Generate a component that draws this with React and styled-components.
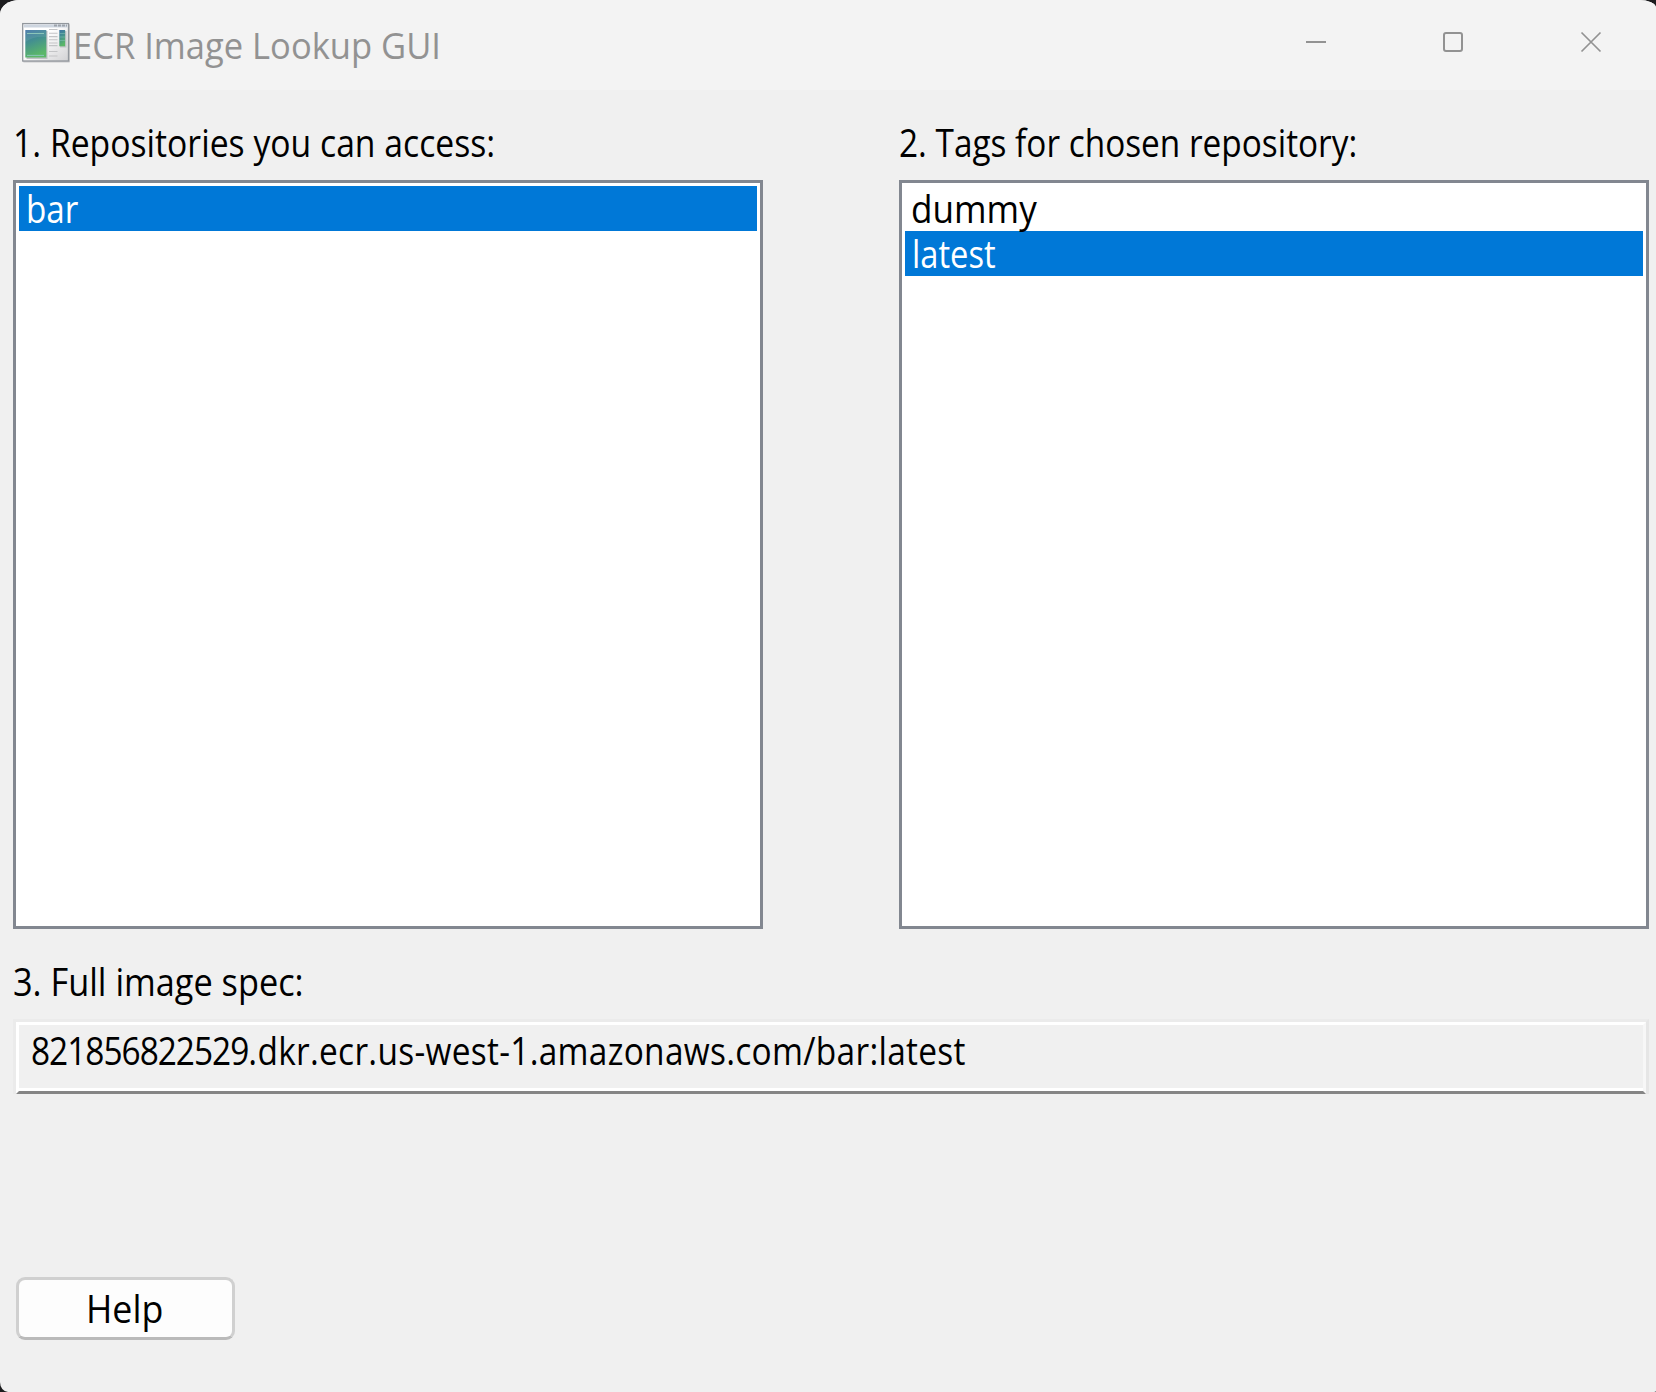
import React, { useState } from "react";
import styled, { createGlobalStyle } from "styled-components";

const GlobalStyle = createGlobalStyle`
  *, *::before, *::after { box-sizing: border-box; }
  body { margin: 0; background: #1c1c1e; }
`;

const Window = styled.div`
  width: 1656px;
  height: 1392px;
  display: flex;
  flex-direction: column;
  background: #f0f0f0;
  border-radius: 20px 17px 2px 8px / 14px 8px 1px 10px;
  overflow: hidden;
  font-family: "Open Sans", "Noto Sans", sans-serif;
  font-size: 38px;
  line-height: 42px;
  color: #000;
`;

const TitleBar = styled.header`
  flex: none;
  height: 90px;
  display: flex;
  align-items: flex-start;
  background: #f3f3f3;
  color: #929292;
`;

const AppIcon = styled.svg`
  flex: none;
  margin: 22px 3px 0 22px;
`;

const Title = styled.h1`
  flex: 1;
  margin: 21px 0 0;
  font-size: 36px;
  line-height: 49px;
  font-weight: 400;
`;

const Condensed = styled.span`
  display: inline-block;
  white-space: pre;
  transform: scaleX(${(p) => p.$ratio});
  transform-origin: 0 0;
`;

const AccountId = styled.span`
  letter-spacing: -1.15px;
`;

const ImagePath = styled.span`
  letter-spacing: 0.33px;
`;

const Controls = styled.div`
  display: flex;
  padding-right: 27px;
`;

const ControlButton = styled.button`
  width: 76px;
  height: 84px;
  margin-left: 62px;
  padding: 0;
  display: flex;
  align-items: center;
  justify-content: center;
  border: 0;
  background: none;
  color: #929292;
`;

const Content = styled.main`
  flex: 1;
  display: flex;
  flex-direction: column;
  align-items: flex-start;
  padding: 31px 7px 0 13px;
`;

const Columns = styled.div`
  display: flex;
  gap: 136px;
`;

const Column = styled.section`
  width: 750px;
`;

const Label = styled.label`
  display: block;
  height: 59px;
`;

const ListBox = styled.ul`
  height: 749px;
  margin: 0;
  padding: 3px;
  list-style: none;
  background: #fff;
  border: 3px solid #828790;
`;

const Item = styled.li`
  height: 45px;
  padding: 1px 0 0 ${(p) => p.$indent}px;
  background: ${(p) => (p.$selected ? "#0078d7" : "transparent")};
  color: ${(p) => (p.$selected ? "#fff" : "#000")};
  cursor: default;
`;

const Spec = styled.section`
  width: 100%;
  padding-top: 31px;
`;

const Field = styled.div`
  height: 75px;
  border: 3px solid #ebebeb;
  border-right-color: #e6e6e6;
  border-bottom: 0;
`;

const FieldInner = styled.div`
  height: 72px;
  padding: 4px 0 0 12px;
  border: 3px solid #fff;
  border-right-color: #f7f7f7;
  border-bottom-color: #858585;
  box-shadow: inset 0 -3px 0 #fff;
`;

const HelpButton = styled.button`
  width: 219px;
  height: 63px;
  margin: 183px 0 0 3px;
  padding: 7px 0 0 67px;
  display: flex;
  align-items: flex-start;
  border: 3px solid #d0d0d0;
  border-bottom-color: #bababa;
  border-radius: 9px;
  background: #fdfdfd;
  color: #000;
  font: inherit;
`;

function WindowIcon() {
  return (
    <AppIcon width="48" height="41" viewBox="0 0 48 41">
      <defs>
        <linearGradient id="pane" x1="0" y1="0" x2="0.3" y2="1">
          <stop offset="0" stopColor="#3f74a6" />
          <stop offset="0.45" stopColor="#438f90" />
          <stop offset="1" stopColor="#5bb768" />
        </linearGradient>
        <linearGradient id="sheet" x1="0" y1="0" x2="1" y2="1">
          <stop offset="0.4" stopColor="#fff" />
          <stop offset="1" stopColor="#d2d2d4" />
        </linearGradient>
      </defs>
      <rect x="1" y="2" width="47" height="38.5" rx="1" fill="#c9c9cb" />
      <rect x="0.7" y="1.6" width="45.8" height="37.4" fill="url(#sheet)" stroke="#92979d" strokeWidth="1.3" />
      <rect x="2" y="2.5" width="43.5" height="3" fill="#cdd5df" />
      <path d="M32 3.5h13" stroke="#9da3ab" strokeWidth="2" strokeDasharray="3 1" />
      <rect x="4.5" y="9" width="21" height="28" fill="#bfc1c4" />
      <rect x="3.3" y="8" width="21" height="27.5" fill="url(#pane)" />
      <path d="M3.3 20Q12 14 24.3 15V8h-21z" fill="#fff" opacity="0.08" />
      <path d="M5 11.5h17M5 33.4h17" stroke="#8bc5b9" strokeWidth="1" />
      <path d="M27 7.5h8.5M27 11.3h8.5M27 14.6h8.5M27 17.7h8.5M27 21h8.5M27 23.6h8.5M27 29.5h8.5M27 34h8.5" stroke="#c3c4c6" strokeWidth="1.1" />
      <rect x="38" y="9" width="6.5" height="16.5" fill="#c2c4c7" />
      <rect x="37.3" y="8" width="5.8" height="16.3" fill="url(#pane)" />
      <path d="M37.3 11.5h5.8M37.3 15h5.8M37.3 18.5h5.8" stroke="#8bc5b9" strokeWidth="0.5" />
    </AppIcon>
  );
}

const CONTROLS = [
  { label: "Minimize", shape: <path d="M1 10h20" /> },
  { label: "Maximize", shape: <rect x="1" y="1" width="18" height="18" rx="2" /> },
  { label: "Close", shape: <path d="M.5.5l19 19M19.5.5l-19 19" strokeWidth="1.7" /> },
];

const REPOSITORIES = [{ name: "bar", ratio: 0.875, indent: 7.2 }];
const TAGS = [
  { name: "dummy", ratio: 0.925, indent: 5.8 },
  { name: "latest", ratio: 0.86, indent: 7 },
];

function Picker({ items, selected, onSelect }) {
  return (
    <ListBox>
      {items.map(({ name, ratio, indent }) => (
        <Item key={name} $indent={indent} $selected={name === selected} onClick={() => onSelect(name)}>
          <Condensed $ratio={ratio}>{name}</Condensed>
        </Item>
      ))}
    </ListBox>
  );
}

export default function App() {
  const [repository, setRepository] = useState("bar");
  const [tag, setTag] = useState("latest");

  return (
    <>
      <GlobalStyle />
      <Window>
        <TitleBar>
          <WindowIcon />
          <Title>
            <Condensed $ratio={0.959}>ECR Image Lookup GUI</Condensed>
          </Title>
          <Controls>
            {CONTROLS.map(({ label, shape }) => (
              <ControlButton key={label} aria-label={label}>
                <svg width="20" height="20" viewBox="0 0 20 20" overflow="visible" fill="none" stroke="currentColor" strokeWidth="2">
                  {shape}
                </svg>
              </ControlButton>
            ))}
          </Controls>
        </TitleBar>
        <Content>
          <Columns>
            <Column>
              <Label>
                <Condensed $ratio={0.887}>1. Repositories you can access:</Condensed>
              </Label>
              <Picker items={REPOSITORIES} selected={repository} onSelect={setRepository} />
            </Column>
            <Column>
              <Label>
                <Condensed $ratio={0.878}>2. Tags for chosen repository:</Condensed>
              </Label>
              <Picker items={TAGS} selected={tag} onSelect={setTag} />
            </Column>
          </Columns>
          <Spec>
            <Label>
              <Condensed $ratio={0.902}>3. Full image spec:</Condensed>
            </Label>
            <Field>
              <FieldInner>
                <Condensed $ratio={0.88}>
                  <AccountId>821856822529</AccountId>
                  <ImagePath>{`.dkr.ecr.us-west-1.amazonaws.com/${repository}:${tag}`}</ImagePath>
                </Condensed>
              </FieldInner>
            </Field>
          </Spec>
          <HelpButton>
            <Condensed $ratio={0.94}>Help</Condensed>
          </HelpButton>
        </Content>
      </Window>
    </>
  );
}
